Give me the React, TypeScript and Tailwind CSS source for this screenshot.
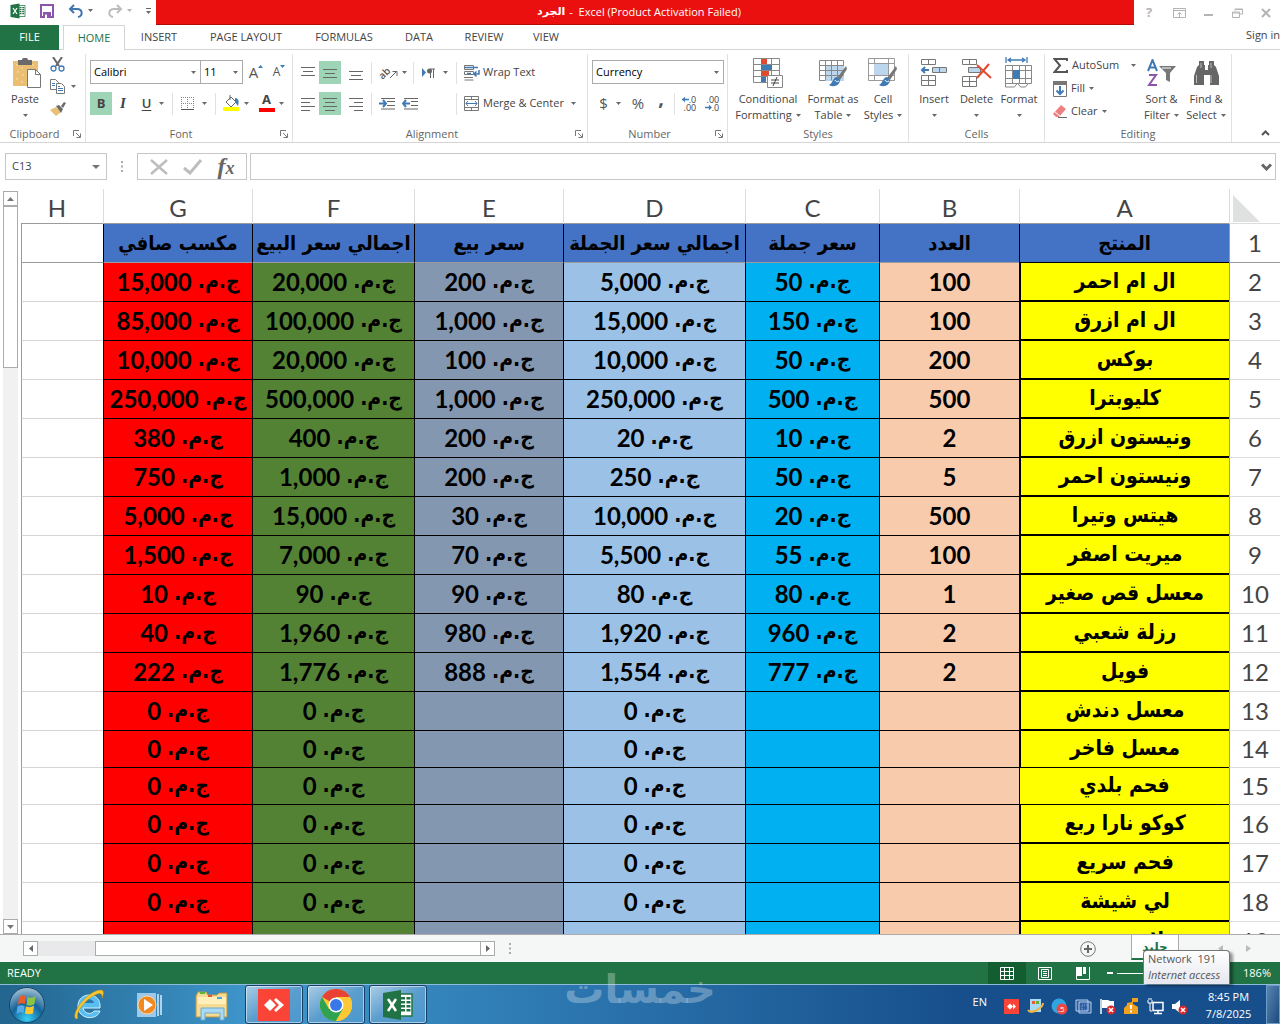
import React from "react";
import { clsx } from "clsx";

type Kids = { children?: React.ReactNode };

function Ico({ w, h, children }: Kids & { w: number; h: number }) {
  return (
    <svg width={w} height={h} viewBox={`0 0 ${w} ${h}`} fill="none" className="shrink-0" aria-hidden="true">
      {children}
    </svg>
  );
}

function Caret({ light = false }: { light?: boolean }) {
  return (
    <Ico w={5} h={3}>
      <path d="M0 0h5L2.5 3z" fill={light ? "#b5b5b5" : "#6a6a6a"} />
    </Ico>
  );
}

function Launcher() {
  return (
    <Ico w={8} h={8}>
      <path d="M.5 6V.5H6M3 3l4 4M7.500 3.500v4h-4" stroke="#777" />
    </Ico>
  );
}

function Divider() {
  return <span className="h-[22px] w-px shrink-0 bg-[#e1e1e1]" />;
}

function Group({ name, width, launcher, children }: Kids & { name: string; width: string; launcher?: boolean }) {
  return (
    <section className={clsx("relative flex shrink-0 flex-col border-r border-[#e1e1e1]", width)} aria-label={name}>
      <div className="flex h-[72px] shrink-0">{children}</div>
      <div className={clsx("flex h-4 items-center justify-center text-[11px] text-[#666]", launcher && "pr-4")}>{name}</div>
      {launcher && (
        <button aria-label={`${name} settings`} className="absolute right-1 bottom-1">
          <Launcher />
        </button>
      )}
    </section>
  );
}

function Tool({ label, width, active, children }: Kids & { label: string; width: string; active?: boolean }) {
  return (
    <button
      aria-label={label}
      className={clsx("flex h-[23px] shrink-0 items-center justify-center gap-1", width, active && "bg-[#9fd5b7]")}
    >
      {children}
    </button>
  );
}

function BigTool({ width, icon, lines }: { width: string; icon: React.ReactNode; lines: string[] }) {
  return (
    <button className={clsx("flex shrink-0 flex-col items-center whitespace-nowrap text-[11px] leading-4 text-[#444]", width)}>
      <span className="flex h-[37px] items-center">{icon}</span>
      <span>{lines[0]}</span>
      <span className="flex h-4 items-center gap-1">
        {lines[1]}
        <Caret />
      </span>
    </button>
  );
}

function Combo({ label, value, width }: { label: string; value: string; width: string }) {
  return (
    <span className={clsx("relative flex h-6 items-center border border-[#ababab] bg-white", width)}>
      <select aria-label={label} className="h-full w-full appearance-none bg-transparent pl-[3px] text-[11px] text-black outline-none">
        <option>{value}</option>
      </select>
      <span className="pointer-events-none absolute right-1">
        <Caret />
      </span>
    </span>
  );
}

function Lines({ d }: { d: string }) {
  return (
    <Ico w={14} h={14}>
      <path d={d} stroke="#666" />
    </Ico>
  );
}

const ExcelLogo = ({ size }: { size: number }) => (
  <svg width={size} height={size} viewBox="0 0 32 32" className="shrink-0" aria-hidden="true">
    <path d="M17 5h13v22H17z" fill="#fff" stroke="#217346" strokeWidth="1.500" />
    <path d="M19 8h4v2.500h-4zM24.500 8h4v2.500h-4zM19 12h4v2.500h-4zM24.500 12h4v2.500h-4zM19 16h4v2.500h-4zM24.500 16h4v2.500h-4zM19 20h4v2.500h-4zM24.500 20h4v2.500h-4z" fill="#217346" />
    <path d="M1 4l18-3v30L1 28z" fill="#217346" />
    <path d="M6 10l8 12M14 10L6 22" stroke="#fff" strokeWidth="2.500" />
  </svg>
);

function TitleBar() {
  return (
    <header className="flex h-[25px] shrink-0 items-stretch bg-white">
      <div className="flex w-[156px] shrink-0 items-center gap-[14px] pb-1 pl-[10px]">
        <ExcelLogo size={16} />
        <button aria-label="Save">
          <Ico w={14} h={14}>
            <path d="M1 1h12v12H1z" stroke="#8a55ab" strokeWidth="2" />
            <path d="M3 8h8v6H3z" fill="#8a55ab" />
            <path d="M5 10.500h2V14H5z" fill="#fff" />
          </Ico>
        </button>
        <button aria-label="Undo" className="flex items-center gap-1">
          <Ico w={16} h={14}>
            <path d="M2 5h7c6 0 6 7 1 8M6 1L2 5l4 4" stroke="#3f76ae" strokeWidth="2" />
          </Ico>
          <Caret />
        </button>
        <button aria-label="Redo" className="flex items-center gap-1">
          <Ico w={16} h={14}>
            <path d="M14 5H7C1 5 1 12 6 13M10 1l4 4-4 4" stroke="#bdbdbd" strokeWidth="2" />
          </Ico>
          <Caret light />
        </button>
        <Ico w={5} h={6}>
          <path d="M0 .5h5" stroke="#666" />
          <path d="M0 3h5L2.500 6z" fill="#666" />
        </Ico>
      </div>
      <h1 className="flex min-w-0 flex-1 items-center justify-center gap-1 border-b border-[#b00b0b] bg-[#eb1010] pr-3 text-[11px] text-white">
        <bdi className="font-['DejaVu_Sans'] font-bold">الجرد</bdi>
        <span>-&nbsp; Excel (Product Activation Failed)</span>
      </h1>
      <div className="flex w-[146px] shrink-0 items-center justify-between pr-[9px] pl-[9px] text-[#b4b4b4]">
        <button aria-label="Help" className="w-3 text-[13px] font-bold">?</button>
        <button aria-label="Ribbon display options">
          <Ico w={13} h={10}>
            <path d="M.5.5h12v9H.5zM.5 2.500h12M6.500 9V4.500M4.500 6.500l2-2 2 2" stroke="#b4b4b4" />
          </Ico>
        </button>
        <button aria-label="Minimize">
          <Ico w={10} h={10}>
            <path d="M0 7h9" stroke="#b4b4b4" strokeWidth="2" />
          </Ico>
        </button>
        <button aria-label="Restore">
          <Ico w={11} h={10}>
            <path d="M3 2.500V1h7.500v5H8M.5 4h7v5.500h-7zM.5 5h7M3 1.500h7" stroke="#b4b4b4" />
          </Ico>
        </button>
        <button aria-label="Close">
          <Ico w={10} h={10}>
            <path d="M1 1l8 8M9 1L1 9" stroke="#b4b4b4" strokeWidth="2" />
          </Ico>
        </button>
      </div>
    </header>
  );
}

const tabs = [
  ["INSERT", "w-[68px]"],
  ["PAGE LAYOUT", "w-[106px]"],
  ["FORMULAS", "w-[90px]"],
  ["DATA", "w-[60px]"],
  ["REVIEW", "w-[70px]"],
  ["VIEW", "w-[54px]"],
];

function Tabs() {
  return (
    <nav className="flex h-[25px] shrink-0 text-[11px] text-[#444]">
      <button className="w-[59px] bg-[#217346] text-white">FILE</button>
      <span className="w-1 border-b border-[#d5d5d5]" />
      <button className="w-[62px] border border-b-0 border-[#d5d5d5] text-[#217346]">HOME</button>
      {tabs.map(([t, w]) => (
        <button key={t} className={clsx("border-b border-[#d5d5d5] whitespace-nowrap", w)}>
          {t}
        </button>
      ))}
      <span className="flex flex-1 justify-end border-b border-[#d5d5d5]">
        <a href="#signin" className="leading-5">Sign in</a>
      </span>
    </nav>
  );
}

const brush = (
  <>
    <path d="M28 8L19 20l3 2 7-11z" fill="#777" />
    <path d="M19 19c-4 0-4 6-8 8 5 3 11 0 11-5z" fill="#3f7ab5" />
    <path d="M17 22c1 2 2 2 4 1" stroke="#fff" />
  </>
);

function Ribbon() {
  return (
    <div className="flex h-[93px] shrink-0 overflow-hidden border-b border-[#d5d5d5] pt-1">
      <Group name="Clipboard" width="w-[86px]" launcher>
        <button className="flex w-[50px] shrink-0 flex-col items-center pt-1 text-[11px] leading-4 text-[#444]">
          <span className="flex h-[33px] items-start pl-1">
            <Ico w={28} h={30}>
              <path d="M0 3h25v25H0z" fill="#ebbf73" />
              <path d="M3 7h2M8 10h2M4 14h2M9 17h2M3 21h2M8 24h2M19 7h2" stroke="#f7e0b4" />
              <path d="M5 2h4c0-3 6-3 6 0h4v5H5z" fill="#6a6a6a" />
              <path d="M14.500 11.500h8l5 5v13h-13z" fill="#fff" stroke="#777" />
              <path d="M22.500 11.500v5h5" stroke="#777" />
            </Ico>
          </span>
          Paste
          <span className="flex h-4 items-center"><Caret /></span>
        </button>
        <div className="flex flex-col items-start gap-[7px] pt-[3px]">
          <button aria-label="Cut">
            <Ico w={15} h={15}>
              <path d="M3 0l6 9M12 0L6 9" stroke="#666" strokeWidth="2" />
              <circle cx="3.500" cy="11.500" r="2.500" stroke="#3f7ab5" strokeWidth="1.300" />
              <circle cx="11.500" cy="11.500" r="2.500" stroke="#3f7ab5" strokeWidth="1.300" />
            </Ico>
          </button>
          <button aria-label="Copy" className="flex items-center gap-1.5">
            <Ico w={15} h={15}>
              <path d="M.5.500h5l3 3v7h-8z" fill="#fff" stroke="#777" />
              <path d="M6.500 4.500h5l3 3v7h-8z" fill="#fff" stroke="#777" />
              <path d="M2 4.500h3M2 6.500h3M8 9.500h5M8 11.500h5M8 7.500h2" stroke="#3f7ab5" />
            </Ico>
            <Caret />
          </button>
          <button aria-label="Format Painter">
            <Ico w={16} h={15}>
              <path d="M0 9l6-3 5 5-5 4z" fill="#ebbf73" />
              <path d="M6 5l3-1 4 4-2 4zM11 5l3-4 2 1-3 5z" fill="#6a6a6a" />
            </Ico>
          </button>
        </div>
      </Group>

      <Group name="Font" width="w-[207px]" launcher>
        <div className="flex flex-col gap-2 pt-[6px] pl-1">
          <div className="flex items-center">
            <Combo label="Font" value="Calibri" width="w-[111px]" />
            <Combo label="Font size" value="11" width="w-[43px] -ml-px" />
            <Tool label="Increase font size" width="w-[26px]">
              <span className="text-[15px] text-[#555]">A</span>
              <span className="-mt-3 -ml-1"><Ico w={5} h={3}><path d="M0 3h5L2.500 0z" fill="#3f7ab5" /></Ico></span>
            </Tool>
            <Tool label="Decrease font size" width="w-5">
              <span className="text-[12px] text-[#555]">A</span>
              <span className="-mt-3 -ml-1"><Ico w={5} h={3}><path d="M0 0h5L2.500 3z" fill="#3f7ab5" /></Ico></span>
            </Tool>
          </div>
          <div className="flex items-center text-[13px] text-[#444]">
            <Tool label="Bold" width="w-[22px]" active><b>B</b></Tool>
            <Tool label="Italic" width="w-[22px]"><i className="font-['Liberation_Serif'] text-[15px] font-bold">I</i></Tool>
            <Tool label="Underline" width="w-[38px]"><span className="mr-1 font-semibold underline underline-offset-2">U</span><Caret /></Tool>
            <Divider />
            <Tool label="Borders" width="w-[42px]">
              <span className="mr-1"><Ico w={13} h={13}>
                <path d="M.5 0v12M6.500 0v12M12.500 0v12M0 .5h13M0 6.500h13" stroke="#888" strokeDasharray="1 1" />
                <path d="M0 12.500h13" stroke="#555" />
              </Ico></span>
              <Caret />
            </Tool>
            <Divider />
            <Tool label="Fill color" width="w-[40px]">
              <Ico w={17} h={17}>
                <path d="M3 7l5-5 5 5-5 5zM7 5V0" stroke="#666" />
                <path d="M12 3c4 0 4 4 3 8l-3-4z" fill="#3f7ab5" />
                <path d="M0 12h16v4H0z" fill="#ff0" />
              </Ico>
              <Caret />
            </Tool>
            <Tool label="Font color" width="w-[30px]">
              <span className="flex h-4 w-4 items-center justify-center border-b-4 border-[#f00] pb-[3px] font-bold">A</span>
              <Caret />
            </Tool>
          </div>
        </div>
      </Group>

      <Group name="Alignment" width="w-[295px]" launcher>
        <div className="flex flex-col gap-2 pt-[7px] pl-1">
          <div className="flex items-center">
            <Tool label="Top align" width="w-[22px]"><Lines d="M0 1.500h14M2 5.500h10M0 9.500h14" /></Tool>
            <Tool label="Middle align" width="w-[22px]" active><Lines d="M0 3.500h14M2 7.500h10M0 11.500h14" /></Tool>
            <Tool label="Bottom align" width="w-[30px]"><Lines d="M0 5.500h14M2 9.500h10M0 13.500h14" /></Tool>
            <Divider />
            <Tool label="Orientation" width="w-[41px]">
              <span className="flex items-center">
                <span className="-rotate-45 text-[10px] leading-3 font-semibold text-[#555]">ab</span>
                <Ico w={8} h={12}><path d="M0 11l6-6M2.500 4.500H7V9" stroke="#666" /></Ico>
              </span>
              <Caret />
            </Tool>
            <Divider />
            <Tool label="Text direction" width="w-[42px]">
              <span className="mr-1"><Ico w={13} h={10}>
                <path d="M0 0v9l4-4.500z" fill="#3f7ab5" />
                <path d="M8.500 1v9M11.500 1v9M13 1H8" stroke="#666" />
                <circle cx="7.500" cy="3" r="2.500" fill="#666" />
              </Ico></span>
              <Caret />
            </Tool>
            <Divider />
            <button className="ml-[7px] flex items-center gap-[3px] text-[11px] whitespace-nowrap text-[#444]">
              <Ico w={16} h={16}>
                <path d="M.5.500h9v4h-9zM.5 6.500h9v3h-9zM.5 15h9M0 12.500h9" stroke="#777" />
                <path d="M1 2.500h13M3 8.500h4" stroke="#3f7ab5" strokeWidth="1.500" />
                <path d="M15 5v4h-4M12.500 6.500L10 9l2.500 2.500" stroke="#3f7ab5" strokeWidth="1.500" />
              </Ico>
              Wrap Text
            </button>
          </div>
          <div className="flex items-center">
            <Tool label="Align left" width="w-[22px]"><Lines d="M0 1.500h14M0 5.500h9M0 9.500h14M0 13.500h9" /></Tool>
            <Tool label="Center" width="w-[22px]" active><Lines d="M0 1.500h14M2 5.500h10M0 9.500h14M2 13.500h10" /></Tool>
            <Tool label="Align right" width="w-[30px]"><Lines d="M0 1.500h14M5 5.500h9M0 9.500h14M5 13.500h9" /></Tool>
            <Divider />
            <Tool label="Decrease indent" width="w-[30px]">
              <Ico w={16} h={12}>
                <path d="M2 .5h14M8 3.500h8M8 7.500h8M2 11h14" stroke="#666" />
                <path d="M0 5.500h6M4 2l3 3.500L4 9" stroke="#3f7ab5" strokeWidth="2" />
              </Ico>
            </Tool>
            <Tool label="Increase indent" width="w-[15px]">
              <Ico w={16} h={12}>
                <path d="M2 .5h14M9 3.500h7M9 7.500h7M2 11h14" stroke="#666" />
                <path d="M8 5.500H2M4 2L1 5.500 4 9" stroke="#3f7ab5" strokeWidth="2" />
              </Ico>
            </Tool>
            <span className="w-[39px] shrink-0" />
            <Divider />
            <button className="ml-[7px] flex items-center gap-[3px] text-[11px] whitespace-nowrap text-[#444]">
              <Ico w={16} h={16}>
                <path d="M.5.500h14v14H.5zM0 3.500h15M0 11.500h15M7.500 0v3M7.500 12v3" stroke="#777" />
                <path d="M2 7.500h11M4 5L2 7.500 4 10M11 5l2 2.500-2 2.500" stroke="#3f7ab5" />
              </Ico>
              Merge &amp; Center
              <span className="ml-1"><Caret /></span>
            </button>
          </div>
        </div>
      </Group>

      <Group name="Number" width="w-[140px]" launcher>
        <div className="flex flex-col gap-2 pt-[6px] pl-1">
          <Combo label="Number format" value="Currency" width="w-[132px]" />
          <div className="flex items-center text-[15px] text-[#555]">
            <Tool label="Currency style" width="w-[36px]"><span className="mr-1">$</span><Caret /></Tool>
            <Tool label="Percent style" width="w-[20px]">%</Tool>
            <Tool label="Comma style" width="w-[26px]"><b className="-mt-3 text-[20px]">,</b></Tool>
            <Divider />
            <Tool label="Increase decimal" width="w-[28px]">
              <span className="flex flex-col items-end text-[9px] leading-[8px] text-[#444]">
                <span className="flex items-center">
                  <Ico w={7} h={5}><path d="M0 2.500h7M3 .5l-2 2 2 2" stroke="#3f7ab5" strokeWidth="1.300" /></Ico>
                  .0
                </span>
                <span>.00</span>
              </span>
            </Tool>
            <Tool label="Decrease decimal" width="w-[18px]">
              <span className="flex flex-col items-end text-[9px] leading-[8px] text-[#444]">
                <span>.00</span>
                <span className="flex items-center">
                  <Ico w={7} h={5}><path d="M0 2.500h6M4 .5l2 2-2 2" stroke="#3f7ab5" strokeWidth="1.300" /></Ico>
                  .0
                </span>
              </span>
            </Tool>
          </div>
        </div>
      </Group>

      <Group name="Styles" width="w-[181px]">
        <BigTool
          width="w-[80px]"
          lines={["Conditional", "Formatting"]}
          icon={
            <Ico w={30} h={30}>
              <path d="M.5.500h26v24H.5zM.5 6.500h26M.5 12.500h26M.5 18.500h26M8.500.500v24M18.500.500v24" fill="#fff" stroke="#888" />
              <path d="M8 1h6v5H8zM8 13h8v5H8z" fill="#e2492f" />
              <path d="M8 7h11v5H8zM8 19h5v5H8z" fill="#3f7ab5" />
              <path d="M14.500 17.500h15v12h-15z" fill="#fff" stroke="#888" />
              <path d="M18 22h8M18 25h8M24 19l-4 9" stroke="#444" />
            </Ico>
          }
        />
        <BigTool
          width="w-[50px]"
          lines={["Format as", "Table"]}
          icon={
            <Ico w={30} h={30}>
              <path d="M1.500 2.500h24v20h-24z" fill="#fff" stroke="#888" />
              <path d="M7 8h19v15H7z" fill="#bcd7ed" />
              <path d="M1.500 7.500h24M1.500 12.500h24M1.500 17.500h24M7.500 2.500v20M13.500 2.500v20M19.500 2.500v20" stroke="#888" />
              {brush}
            </Ico>
          }
        />
        <BigTool
          width="w-[50px]"
          lines={["Cell", "Styles"]}
          icon={
            <Ico w={30} h={30}>
              <path d="M.5.500h26v22H.5zM.5 5.500h26M.5 17.500h26M6.500.500v22M20.500.500v22" fill="#fff" stroke="#999" />
              <path d="M6 6h14v11H6z" fill="#bcd7ed" />
              {brush}
            </Ico>
          }
        />
      </Group>

      <Group name="Cells" width="w-[136px]">
        <BigTool
          width="w-[50px]"
          lines={["Insert", ""]}
          icon={
            <Ico w={28} h={28}>
              <path d="M1.500.500h14v5h-14zM8.500.500v5M1.500 16.500h14v10h-14zM1.500 21.500h14M8.500 16.500v10" stroke="#777" />
              <path d="M12.500 8.500h14v5h-14zM19.500 8.500v5" fill="#bcd7ed" stroke="#777" />
              <path d="M2 11h7M5 8l-3 3 3 3" stroke="#3f7ab5" strokeWidth="2" />
            </Ico>
          }
        />
        <BigTool
          width="w-[35px]"
          lines={["Delete", ""]}
          icon={
            <Ico w={30} h={28}>
              <path d="M.5.500h14v5H.500zM7.500.500v5M.5 17.500h14v10H.500zM.5 22.500h14M7.500 17.500v10" stroke="#777" />
              <path d="M6.500 8.500h12v5h-12z" fill="#bcd7ed" stroke="#777" />
              <path d="M15 6l14 13M27 5L15 19" stroke="#e2492f" strokeWidth="2" />
            </Ico>
          }
        />
        <BigTool
          width="w-[50px]"
          lines={["Format", ""]}
          icon={
            <Ico w={29} h={32}>
              <path d="M1 0v6M22 0v6M3 3h17M6 1L3 3l3 2M17 1l3 2-3 2" stroke="#3f7ab5" strokeWidth="1.300" />
              <path d="M.5 8.500h26v18H.5zM.5 13.500h26M.5 21.500h26M7.500 8.500v18M14.500 8.500v18M20.500 8.500v18" fill="#fff" stroke="#888" />
              <path d="M8 13h7v9H8z" fill="#3f7ab5" />
              <path d="M.5 26v4h9l3-4 3 4h5l3-4" stroke="#888" />
            </Ico>
          }
        />
      </Group>

      <Group name="Editing" width="w-[187px]">
        <div className="flex w-[92px] shrink-0 flex-col pl-2 text-[11px] text-[#444]">
          <button className="flex h-[23px] items-center gap-1 whitespace-nowrap">
            <Ico w={15} h={15}><path d="M14 3V1H1.500L7 7.500 1.500 14H14v-2" stroke="#555" strokeWidth="2" /></Ico>
            AutoSum
            <span className="ml-2"><Caret /></span>
          </button>
          <button className="flex h-[23px] items-center gap-1">
            <Ico w={14} h={16}>
              <path d="M.5.500h13v15H.5z" stroke="#777" />
              <path d="M0 0h14v4H0z" fill="#777" />
              <path d="M7 5v8M3.500 9.500L7 13l3.500-3.500" stroke="#3f7ab5" strokeWidth="2" />
            </Ico>
            Fill <Caret />
          </button>
          <button className="flex h-[23px] items-center gap-1">
            <Ico w={14} h={14}>
              <path d="M8 0l5 4-7 8H3L0 9z" fill="#f08080" />
              <path d="M2 7l5 4" stroke="#fff" />
              <path d="M5 12.500h9" stroke="#666" />
            </Ico>
            Clear <Caret />
          </button>
        </div>
        <BigTool
          width="w-[49px]"
          lines={["Sort &", "Filter"]}
          icon={
            <Ico w={30} h={28}>
              <path d="M1 12L5.500 1 10 12M2.500 8.500h6" stroke="#3f7ab5" strokeWidth="2" />
              <path d="M2 16h7L2 26h8" stroke="#8a55ab" strokeWidth="2" />
              <path d="M12 7h17l-6 7v9l-4-2v-7z" fill="#777" />
              <path d="M15 9h9" stroke="#fff" />
            </Ico>
          }
        />
        <BigTool
          width="w-[40px]"
          lines={["Find &", "Select"]}
          icon={
            <Ico w={27} h={24}>
              <path d="M6 0h5v4h1v5h3V4h1V0h5v4l2 2 3 9v9h-9v-10h-6v10H1v-9l3-9 2-2z" fill="#666" />
              <path d="M3.500 14v8M18 14v8M8 2v5M18 2v5" stroke="#bbb" />
            </Ico>
          }
        />
      </Group>
      <button aria-label="Collapse ribbon" className="ml-auto flex items-end pr-[10px] pb-1.5">
        <Ico w={9} h={6}><path d="M1 5l3.500-3.500L8 5" stroke="#555" strokeWidth="2" /></Ico>
      </button>
    </div>
  );
}

function Dots() {
  return (
    <Ico w={2} h={11}><path d="M0 1h2M0 5.500h2M0 10h2" stroke="#aaa" strokeWidth="2" /></Ico>
  );
}

function FormulaBar() {
  return (
    <div className="flex h-[46px] shrink-0 items-start pt-[10px] pr-1 pl-[5px]">
      <div className="relative flex h-[27px] w-[102px] items-center border border-[#c6c6c6]">
        <input aria-label="Name box" defaultValue="C13" className="w-full pl-[6px] text-[11px] text-[#444] outline-none" />
        <span className="absolute right-[6px]"><Ico w={8} h={4}><path d="M0 0h8L4 4z" fill="#777" /></Ico></span>
      </div>
      <span className="flex h-[27px] w-[30px] items-center justify-center"><Dots /></span>
      <div className="flex h-[27px] w-[110px] items-center justify-around border border-[#c6c6c6] px-1">
        <button aria-label="Cancel"><Ico w={18} h={16}><path d="M1 1l16 14M17 1L1 15" stroke="#bdbdbd" strokeWidth="2.500" /></Ico></button>
        <button aria-label="Enter"><Ico w={20} h={16}><path d="M1 9l6 5L18 1" stroke="#bdbdbd" strokeWidth="3" /></Ico></button>
        <button aria-label="Insert function" className="font-['Liberation_Serif'] text-[24px] leading-5 font-bold text-[#666] italic">
          f<span className="text-[18px]">x</span>
        </button>
      </div>
      <div className="ml-[3px] flex h-[27px] min-w-0 flex-1 items-center border border-[#c6c6c6] pr-[3px]">
        <input aria-label="Formula" className="min-w-0 flex-1 px-2 text-[12px] outline-none" />
        <Ico w={11} h={8}><path d="M1 1.500l4.500 4.500L10 1.500" stroke="#666" strokeWidth="3" /></Ico>
      </div>
    </div>
  );
}

type Row = { name: string; qty?: string; c?: string; d?: string; e?: string; f?: string; g?: string };

const rows: Row[] = [
  { name: "ال ام احمر", qty: "100", c: "50", d: "5,000", e: "200", f: "20,000", g: "15,000" },
  { name: "ال ام ازرق", qty: "100", c: "150", d: "15,000", e: "1,000", f: "100,000", g: "85,000" },
  { name: "بوكس", qty: "200", c: "50", d: "10,000", e: "100", f: "20,000", g: "10,000" },
  { name: "كليوبترا", qty: "500", c: "500", d: "250,000", e: "1,000", f: "500,000", g: "250,000" },
  { name: "ونيستون ازرق", qty: "2", c: "10", d: "20", e: "200", f: "400", g: "380" },
  { name: "ونيستون احمر", qty: "5", c: "50", d: "250", e: "200", f: "1,000", g: "750" },
  { name: "هيتس وتيرا", qty: "500", c: "20", d: "10,000", e: "30", f: "15,000", g: "5,000" },
  { name: "ميريت اصفر", qty: "100", c: "55", d: "5,500", e: "70", f: "7,000", g: "1,500" },
  { name: "معسل قص صغير", qty: "1", c: "80", d: "80", e: "90", f: "90", g: "10" },
  { name: "رزلة شعبي", qty: "2", c: "960", d: "1,920", e: "980", f: "1,960", g: "40" },
  { name: "فويل", qty: "2", c: "777", d: "1,554", e: "888", f: "1,776", g: "222" },
  { name: "معسل دندش", d: "0", f: "0", g: "0" },
  { name: "معسل فاخر", d: "0", f: "0", g: "0" },
  { name: "فحم بلدي", d: "0", f: "0", g: "0" },
  { name: "كوكو نارا ربع", d: "0", f: "0", g: "0" },
  { name: "فحم سريع", d: "0", f: "0", g: "0" },
  { name: "لي شيشة", d: "0", f: "0", g: "0" },
  { name: "ولاعة تيربو" },
];

function Money({ value, bg }: { value?: string; bg: string }) {
  return (
    <td className={clsx("border-b border-l border-black p-0 text-center whitespace-nowrap", bg)}>
      {value && (
        <div dir="rtl" className="flex h-0 items-center justify-center gap-[6px]">
          <span className="text-[21px]">ج.م.</span>
          <span className="font-['Lato'] text-[24px]">{value}</span>
        </div>
      )}
    </td>
  );
}

const heads = ["مكسب صافي", "اجمالي سعر البيع", "سعر بيع", "اجمالي سعر الجملة", "سعر جملة", "العدد"];

function Sheet() {
  return (
    <table className="w-full table-fixed border-separate border-spacing-0 font-['DejaVu_Sans_Condensed','DejaVu_Sans',sans-serif] font-bold text-black">
      <colgroup>
        <col />
        <col className="w-[149px]" />
        <col className="w-[162px]" />
        <col className="w-[149px]" />
        <col className="w-[182px]" />
        <col className="w-[134px]" />
        <col className="w-[140px]" />
        <col className="w-[210px]" />
        <col className="w-[51px]" />
      </colgroup>
      <thead className="font-['Lato'] text-[24px] font-normal text-[#444]">
        <tr className="h-[35px]">
          {["H", "G", "F", "E", "D", "C", "B", "A"].map((c) => (
            <th key={c} scope="col" className={clsx("border-b border-[#9b9b9b] p-0 pt-1 leading-[30px] font-normal", c === "H" ? "pr-[10px]" : "border-l border-l-[#dcdcdc]")}>
              {c}
            </th>
          ))}
          <th className="border-b border-l border-[#dcdcdc] p-0 pt-1 pl-[3px]">
            <Ico w={27} h={27}><path d="M0 0l27 27H0z" fill="#dfe1e0" /></Ico>
          </th>
        </tr>
      </thead>
      <tbody>
        <tr className="h-[39px] text-[20px]">
          <td className="border-b border-l border-[#9b9b9b]" />
          {heads.map((h) => (
            <th key={h} scope="col" className="border-b border-l border-b-[#9b9b9b] border-l-black bg-[#4472c4] p-0 whitespace-nowrap">
              <div dir="rtl" className="flex h-0 items-center justify-center">{h}</div>
            </th>
          ))}
          <th scope="col" className="border-b border-l border-black bg-[#4472c4] p-0">
            <div className="flex h-0 items-center justify-center">المنتج</div>
          </th>
          <th scope="row" className="border-b border-l border-[#9b9b9b] p-0 font-['Lato'] text-[24px] font-normal text-[#444]">
            <div className="flex h-0 items-center justify-center">1</div>
          </th>
        </tr>
        {rows.map((r, i) => {
          const n = i + 2;
          const thin = n === 14 || n === 15;
          return (
            <tr key={n} className={thin ? "h-[37px]" : "h-[39px]"}>
              <td className="border-b border-l border-b-[#d5d5d5] border-l-[#9b9b9b]" />
              <Money value={r.g} bg="bg-[#ff0000]" />
              <Money value={r.f} bg="bg-[#548235]" />
              <Money value={r.e} bg="bg-[#8497b0]" />
              <Money value={r.d} bg="bg-[#9bc2e6]" />
              <Money value={r.c} bg="bg-[#00b0f0]" />
              <td className="border-b border-l border-black bg-[#f8cbad] p-0">
                <div className="flex h-0 items-center justify-center font-['Lato'] text-[24px]">{r.qty}</div>
              </td>
              <td className={clsx("border-black bg-[#ffff00] p-0", thin ? "border-b" : "border-b-2", n === 15 ? "border-l" : "border-l-2")}>
                <div dir="rtl" className="flex h-0 items-center justify-center text-[21px] whitespace-nowrap">{r.name}</div>
              </td>
              <th scope="row" className="border-b border-l border-b-[#dcdcdc] border-l-[#9b9b9b] p-0 font-['Lato'] text-[24px] font-normal text-[#444]">
                <div className="flex h-0 items-center justify-center">{n}</div>
              </th>
            </tr>
          );
        })}
      </tbody>
    </table>
  );
}

const sbtn = "flex shrink-0 items-center justify-center border border-[#ababab] bg-white";

function Grid() {
  return (
    <main className="flex min-h-0 flex-1 overflow-hidden border-b border-[#ababab]">
      <div className="flex w-[21px] shrink-0 flex-col pt-0.5 pl-[3px]">
        <button aria-label="Scroll up" className={clsx(sbtn, "h-[15px] w-[15px]")}>
          <Ico w={7} h={4}><path d="M0 4h7L3.500 0z" fill="#777" /></Ico>
        </button>
        <div className="w-[15px] flex-1 bg-[#f1f1f1]">
          <div className="h-[162px] border border-[#ababab] bg-white" />
        </div>
        <button aria-label="Scroll down" className={clsx(sbtn, "h-[15px] w-[15px]")}>
          <Ico w={7} h={4}><path d="M0 0h7L3.500 4z" fill="#777" /></Ico>
        </button>
      </div>
      <div className="min-w-0 flex-1"><Sheet /></div>
    </main>
  );
}

function SheetBar() {
  return (
    <div className="flex h-[27px] shrink-0 items-center bg-[#f5f6f6] pl-[23px]">
      <button aria-label="Scroll left" className={clsx(sbtn, "h-[15px] w-[15px]")}>
        <Ico w={4} h={7}><path d="M4 0v7L0 3.500z" fill="#666" /></Ico>
      </button>
      <div className="flex h-[15px] w-[443px] justify-end bg-[#e9e9ec]">
        <div className="w-[386px] border border-[#ababab] bg-white" />
      </div>
      <button aria-label="Scroll right" className={clsx(sbtn, "-ml-px h-[15px] w-[15px]")}>
        <Ico w={4} h={7}><path d="M0 0v7l4-3.500z" fill="#666" /></Ico>
      </button>
      <span className="ml-[14px]"><Dots /></span>
      <div className="ml-auto flex h-full w-[200px] items-center">
        <button aria-label="New sheet">
          <Ico w={16} h={16}>
            <circle cx="8" cy="8" r="7.300" stroke="#777" />
            <path d="M8 4v8M4 8h8" stroke="#666" strokeWidth="2" />
          </Ico>
        </button>
        <button className="ml-[35px] h-[25px] w-12 self-start border-x border-b-2 border-x-[#ababab] border-b-[#217346] bg-white font-['DejaVu_Sans'] text-[12px] font-bold text-[#217346]">
          جليد
        </button>
        <button aria-label="Previous sheet" className="ml-[39px]"><Ico w={5} h={7}><path d="M5 0v7L0 3.500z" fill="#bbb" /></Ico></button>
        <button aria-label="Next sheet" className="ml-[23px]"><Ico w={5} h={7}><path d="M0 0v7l5-3.500z" fill="#bbb" /></Ico></button>
      </div>
    </div>
  );
}

function StatusBar() {
  return (
    <footer className="flex h-[22px] shrink-0 items-center justify-between bg-[#217346] pr-[9px] pl-[7px] text-[11px] text-white">
      <span>READY</span>
      <div className="relative flex h-full w-[283px] items-center">
        <button aria-label="Normal view" className="flex h-full w-[38px] items-center justify-center bg-[#135e30]">
          <Ico w={14} h={13}><path d="M.5.500h13v12H.500zM.5 4.500h13M.5 8.500h13M4.500.500v12M9.500.500v12" stroke="#fff" /></Ico>
        </button>
        <button aria-label="Page layout view" className="flex w-[38px] justify-center">
          <Ico w={14} h={13}><path d="M.5.500h13v12H.500zM3.500 2.500h7v8h-7zM5 4.500h4M5 6.500h4M5 8.500h4" stroke="#fff" /></Ico>
        </button>
        <button aria-label="Page break view" className="flex w-[38px] justify-center">
          <Ico w={14} h={13}><path d="M0 0h6v9H0zM7 0h3v7H7z" fill="#fff" /><path d="M.5 0v12.500h13V0" stroke="#fff" /></Ico>
        </button>
        <button aria-label="Zoom out" className="ml-[5px] h-0.5 w-[6px] bg-white" />
        <span className="ml-1 h-px w-[84px] bg-white" />
        <span className="ml-auto">186%</span>
        <div role="tooltip" className="absolute bottom-0 left-[155px] z-10 h-[34px] w-[87px] rounded-t-sm border border-b-0 border-[#767676] bg-linear-to-b from-white to-[#e6e7ef] pl-1 text-[11px] leading-4 whitespace-nowrap text-[#575757] shadow-[3px_2px_3px_rgba(0,0,0,0.4)]">
          Network&nbsp; 191
          <br />
          <i>Internet access</i>
        </div>
      </div>
    </footer>
  );
}

const taskBtn =
  "flex h-[39px] w-[58px] items-center justify-center rounded-[3px] border border-[#173f63] bg-linear-to-br from-[#a9cde6] via-[#5b9dcd] to-[#4a98cf] shadow-[inset_0_0_0_1px_rgba(255,255,255,0.5)]";

const Badge = () => (
  <>
    <circle cx="12" cy="12" r="4.500" fill="#d8262c" />
    <path d="M10 10l4 4M14 10l-4 4" stroke="#fff" strokeWidth="1.500" />
  </>
);

function Tray({ label, children }: Kids & { label: string }) {
  return (
    <button aria-label={label} className="flex w-6 justify-center">
      <Ico w={17} h={17}>{children}</Ico>
    </button>
  );
}

function Taskbar() {
  return (
    <div className="relative flex h-10 shrink-0 items-center border-t border-[#8dbbd8] bg-linear-to-r from-[#22658f] from-0% via-[#3f97cc] via-20% to-[#174f8c] to-75%">
      <button aria-label="Start" className="ml-2">
        <svg width="38" height="38" viewBox="0 0 38 38">
          <defs>
            <radialGradient id="orb" cx=".5" cy=".9" r=".9">
              <stop offset="0" stopColor="#35d0f5" />
              <stop offset=".5" stopColor="#15639b" />
              <stop offset="1" stopColor="#a9c5d5" />
            </radialGradient>
          </defs>
          <circle cx="19" cy="19" r="17.500" fill="url(#orb)" stroke="#164464" />
          <path d="M11 11c3-2 5-2 7-1l-1 8c-3-1-5-1-7 1z" fill="#e85b2c" />
          <path d="M19.500 11c3 1 5 1 8-1l-1 8c-3 2-5 2-8 1z" fill="#8cc444" />
          <path d="M9.500 20c3-1 5-1 7 0l-1 7c-2-1-4-1-7 1z" fill="#58a9e8" />
          <path d="M18 20.500c3 1 5 1 8-1l-1 8c-3 1-5 1-8 0z" fill="#fbc834" />
        </svg>
      </button>
      <button aria-label="Internet Explorer" className="ml-[26px]">
        <svg width="34" height="34" viewBox="0 0 34 34" fill="none">
          <path d="M28 20H11c1 6 9 7 11 3h6C25 33 6 32 6 18S27 3 28 17z" fill="#58bdf0" stroke="#d1f0ff" />
          <path d="M12 15h10c-1-5-9-5-10 0z" fill="#2c78ad" />
          <path d="M4 31C-2 26 16 2 29 2c4 0 2 6 1 8 1-6-4-5-9-2C11 14 3 26 6 30z" fill="#f9c829" stroke="#ce8b12" strokeWidth=".5" />
        </svg>
      </button>
      <button aria-label="Media Player" className="ml-[29px]">
        <svg width="28" height="28" viewBox="0 0 28 28">
          <path d="M2 2h19v24H2z" fill="#9cc9eb" />
          <path d="M22 3h2v22h-2zM25 4h2v20h-2z" fill="#acd4ef" />
          <circle cx="12" cy="14" r="9" fill="#f08a21" stroke="#fbd5a7" />
          <path d="M9 8l9 6-9 6z" fill="#fff" />
        </svg>
      </button>
      <button aria-label="File Explorer" className="ml-8">
        <svg width="34" height="34" viewBox="0 0 34 34">
          <path d="M1 8l2-4h8l2 3h9l2-2h8v24H1z" fill="#f6dc92" stroke="#bc9445" />
          <path d="M3 9h28v7H3z" fill="#fff0bb" />
          <path d="M5 4h5v2H5z" fill="#5cb43b" /><path d="M13 7h4v2h-4z" fill="#e55833" /><path d="M22 9h5v2h-5z" fill="#45a9df" />
          <path d="M6 32V20h23v12h-4v-7H10v7z" fill="#a9d9f3" stroke="#6caad0" />
        </svg>
      </button>
      <div className="ml-4 flex gap-1">
        <button aria-label="AnyDesk" className={taskBtn}>
          <svg width="32" height="32" viewBox="0 0 32 32"><path d="M0 0h32v32H0z" fill="#fb4438" /><path d="M6 16l6-6 6 6-6 6zM16 11l2-2 8 7-8 7-2-2 5-5z" fill="#fff" /></svg>
        </button>
        <button aria-label="Chrome" className={taskBtn}>
          <svg width="32" height="32" viewBox="0 0 32 32">
            <circle cx="16" cy="16" r="16" fill="#fcc934" />
            <path d="M16 16L2.100 8A16 16 0 0 1 29.900 8H16z" fill="#e94235" />
            <path d="M2.100 8A16 16 0 0 0 16 32l7-12-7-4-7 4z" fill="#30a350" />
            <path d="M29.900 8H16v8l7 4-7 12A16 16 0 0 0 29.900 8z" fill="#fcc934" />
            <circle cx="16" cy="16" r="7.500" fill="#fff" /><circle cx="16" cy="16" r="6" fill="#3878e8" />
          </svg>
        </button>
        <button aria-label="Excel" className={taskBtn}><ExcelLogo size={32} /></button>
      </div>
      <div className="ml-auto flex h-full items-center text-[11px] text-white">
        <span className="mr-3 pb-1">EN</span>
        <div className="flex pt-1">
          <Tray label="AnyDesk status"><path d="M1 1h15v15H1z" fill="#fb4438" /><path d="M4 8.500L7 5.500l3 3-3 3zM10 5.500l3 3-3 3" fill="#fff" /></Tray>
          <Tray label="Display settings"><path d="M3 1h11v13H3z" fill="#a8d9f5" /><path d="M5 3h3v3H5z" fill="#e85b2c" /><path d="M9 3h3v3H9z" fill="#66ad3a" /><path d="M1 12C4 17 16 10 16 5" stroke="#eeb43d" strokeWidth="2" /></Tray>
          <Tray label="Messages"><circle cx="8" cy="8" r="7.500" fill="#2fa6df" /><circle cx="11" cy="11" r="5.500" fill="#ef4640" /><text x="7" y="14" fontSize="8" fill="#fff">.5</text></Tray>
          <Tray label="Processor"><path d="M1 2h12v11H1zM4 4h12v11H4z" fill="#345f9f" stroke="#b5d0ec" /><path d="M7 7h6v5H7z" stroke="#75aae4" strokeDasharray="1 1" /></Tray>
          <Tray label="Action center"><path d="M2 1v15" stroke="#fff" strokeWidth="1.500" /><path d="M3 2h6l2 1h4v7H3z" fill="#fff" /><Badge /></Tray>
          <Tray label="Notifications"><path d="M1 16v-6l3-3V5l5-1V0h6v4h-5v2l5 3v7z" fill="#f3a11c" /><path d="M8 7v4M8 12.500v2" stroke="#fff" strokeWidth="2" /></Tray>
          <Tray label="Network"><path d="M6 4.500h10v8H6zM11 13v2M7 15.500h8" stroke="#fff" strokeWidth="1.500" /><path d="M1 2v3h4V2M3 5v8h2M2 0v2M4 0v2" stroke="#fff" /></Tray>
          <Tray label="Volume"><path d="M1 6h3l5-4v13l-5-4H1z" fill="#fff" /><Badge /></Tray>
        </div>
        <div className="flex w-[75px] flex-col items-center leading-[17px]">
          <span>8:45 PM</span>
          <span>7/8/2025</span>
        </div>
        <button aria-label="Show desktop" className="h-full w-[14px] border border-[#6f9cc5] bg-linear-to-br from-[#5887b3] to-[#1c4a7d]" />
      </div>
      <div className="pointer-events-none absolute -top-4 left-1/2 w-[158px] -translate-x-1/2 text-center font-['DejaVu_Sans'] text-[40px] leading-10 font-bold text-white/30">
        خمسات
      </div>
    </div>
  );
}

export default function App() {
  return (
    <div className="flex h-screen flex-col overflow-hidden bg-white font-['Open_Sans',sans-serif] text-[#444]">
      <TitleBar />
      <Tabs />
      <Ribbon />
      <FormulaBar />
      <Grid />
      <SheetBar />
      <StatusBar />
      <Taskbar />
    </div>
  );
}
